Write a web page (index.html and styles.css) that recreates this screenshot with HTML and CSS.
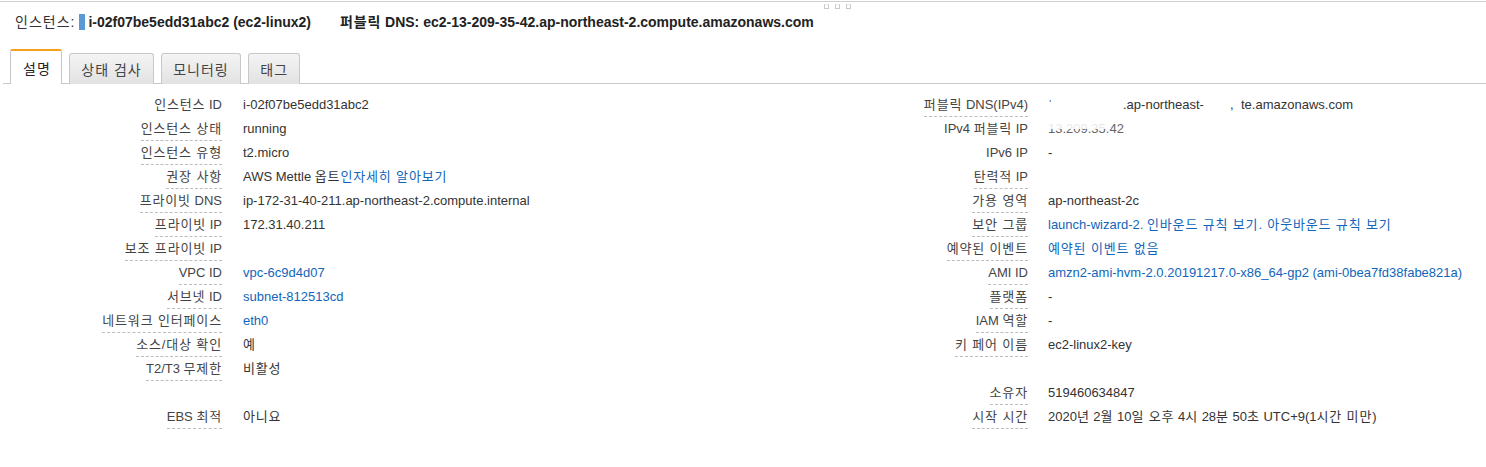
FILE: index.html
```html
<!DOCTYPE html>
<html lang="ko">
<head>
<meta charset="utf-8">
<title>EC2 인스턴스 설명</title>
<link rel="stylesheet" href="styles.css">
</head>
<body>
<div class="page">
  <div class="header">
    <span class="hlabel">인스턴스:</span><span class="bar"></span><b class="hval">i-02f07be5edd31abc2 (ec2-linux2)</b>
    <b class="hdns"><span class="ko">퍼블릭</span> DNS: ec2-13-209-35-42.ap-northeast-2.compute.amazonaws.com</b>
    <div class="grip"><i></i><i></i><i></i></div>
  </div>
  <div class="tabs">
    <div class="tab active">설명</div>
    <div class="tab">상태 검사</div>
    <div class="tab">모니터링</div>
    <div class="tab">태그</div>
  </div>
  <div class="details">
    <div class="col left">
      <div class="k"><span><span class="ko">인스턴스</span> ID</span></div><div class="v">i-02f07be5edd31abc2</div>
      <div class="k"><span class="tip ko">인스턴스 상태</span></div><div class="v">running</div>
      <div class="k"><span class="tip ko">인스턴스 유형</span></div><div class="v">t2.micro</div>
      <div class="k"><span class="tip ko">권장 사항</span></div><div class="v">AWS Mettle <span class="ko">옵트</span><a class="ko">인자세히 알아보기</a></div>
      <div class="k"><span class="tip"><span class="ko">프라이빗</span> DNS</span></div><div class="v">ip-172-31-40-211.ap-northeast-2.compute.internal</div>
      <div class="k"><span class="tip"><span class="ko">프라이빗</span> IP</span></div><div class="v">172.31.40.211</div>
      <div class="k"><span class="tip"><span class="ko">보조 프라이빗</span> IP</span></div><div class="v"></div>
      <div class="k"><span class="tip">VPC ID</span></div><div class="v"><a>vpc-6c9d4d07</a></div>
      <div class="k"><span class="tip"><span class="ko">서브넷</span> ID</span></div><div class="v"><a>subnet-812513cd</a></div>
      <div class="k"><span class="tip ko">네트워크 인터페이스</span></div><div class="v"><a>eth0</a></div>
      <div class="k"><span class="tip ko">소스/대상 확인</span></div><div class="v ko">예</div>
      <div class="k"><span class="tip">T2/T3 <span class="ko">무제한</span></span></div><div class="v ko">비활성</div>
      <div class="k"></div><div class="v"></div>
      <div class="k"><span class="tip">EBS <span class="ko">최적</span></span></div><div class="v ko">아니요</div>
    </div>
    <div class="col right">
      <div class="k"><span class="tip"><span class="ko">퍼블릭</span> DNS(IPv4)</span></div><div class="v"><span class="red1">ˈ</span><span class="red2">.ap-northeast-</span><span class="red3">,</span><span class="red4">te.amazonaws.com</span></div>
      <div class="k"><span>IPv4 <span class="ko">퍼블릭</span> IP</span></div><div class="v"><span class="masked">13.209.35.42</span></div>
      <div class="k"><span>IPv6 IP</span></div><div class="v">-</div>
      <div class="k"><span class="tip"><span class="ko">탄력적</span> IP</span></div><div class="v"></div>
      <div class="k"><span class="tip ko">가용 영역</span></div><div class="v">ap-northeast-2c</div>
      <div class="k"><span class="tip ko">보안 그룹</span></div><div class="v"><a>launch-wizard-2. <span class="ko">인바운드 규칙 보기. 아웃바운드 규칙 보기</span></a></div>
      <div class="k"><span class="tip ko">예약된 이벤트</span></div><div class="v"><a class="ko">예약된 이벤트 없음</a></div>
      <div class="k"><span class="tip">AMI ID</span></div><div class="v"><a>amzn2-ami-hvm-2.0.20191217.0-x86_64-gp2 (ami-0bea7fd38fabe821a)</a></div>
      <div class="k"><span class="tip ko">플랫폼</span></div><div class="v">-</div>
      <div class="k"><span class="tip">IAM <span class="ko">역할</span></span></div><div class="v">-</div>
      <div class="k"><span class="tip ko">키 페어 이름</span></div><div class="v">ec2-linux2-key</div>
      <div class="k"></div><div class="v"></div>
      <div class="k"><span class="tip ko">소유자</span></div><div class="v">519460634847</div>
      <div class="k"><span class="tip ko">시작 시간</span></div><div class="v">2020<span class="ko">년</span> 2<span class="ko">월</span> 10<span class="ko">일 오후</span> 4<span class="ko">시</span> 28<span class="ko">분</span> 50<span class="ko">초</span> UTC+9(1<span class="ko">시간 미만</span>)</div>
    </div>
  </div>
</div>
</body>
</html>
```

FILE: styles.css
```css
html, body {
  margin: 0;
  padding: 0;
  background: #fff;
}
body {
  font-family: "Liberation Sans", "Noto Sans CJK KR", Arial, sans-serif;
  color: #333;
}
.page {
  position: relative;
  width: 1486px;
  height: 467px;
  overflow: hidden;
}
.ko {
  letter-spacing: 0.85px;
}
.header {
  margin-top: 1px;
  border-top: 1px solid #d0d0d0;
  height: 49px;
  display: flex;
  align-items: flex-start;
  padding: 11px 0 0 15px;
  box-sizing: border-box;
  font-size: 14px;
  line-height: 18px;
  color: #222;
}
.hlabel {
  color: #333;
  letter-spacing: 1px;
}
.bar {
  display: inline-block;
  width: 6px;
  height: 16px;
  background: #5b9bd5;
  margin: 1px 3px 0 4px;
}
.hval {
  font-weight: bold;
}
.hdns {
  font-weight: bold;
  margin-left: 29px;
}
.grip {
  position: absolute;
  left: 824px;
  top: 4px;
  display: flex;
  gap: 6px;
}
.grip i {
  display: block;
  width: 3px;
  height: 3px;
  border: 1px solid #c8c8c8;
  border-top-color: #e6e6e6;
}
.tabs {
  display: flex;
  align-items: flex-end;
  gap: 7px;
  margin-left: 3px;
  padding-left: 7px;
  border-bottom: 1px solid #c8c8c8;
  height: 34px;
  box-sizing: border-box;
}
.tab {
  height: 31px;
  margin-bottom: -1px;
  padding: 0 11px 0 11.5px;
  box-sizing: border-box;
  font-size: 14px;
  line-height: 30px;
  letter-spacing: 1px;
  color: #444;
  border: 1px solid #c8c8c8;
  border-bottom: none;
  border-radius: 3px 3px 0 0;
  background: linear-gradient(#f4f4f4, #e2e2e2);
  font-family: "Noto Sans CJK KR", "Liberation Sans", sans-serif;
}
.tab.active {
  padding: 2px 10px 0 12px;
  background: #fff;
  border-top: 2px solid #f7a01c;
  border-radius: 2px 2px 0 0;
  color: #222;
  height: 35px;
}
.details {
  display: grid;
  grid-template-columns: 743px 1fr;
  margin-top: 10px;
  font-size: 13px;
}
.col {
  display: grid;
  grid-auto-rows: 24px;
  column-gap: 21px;
}
.col.left {
  grid-template-columns: 222px 1fr;
}
.col.right {
  grid-template-columns: 285px 1fr;
  column-gap: 20px;
}
.k {
  text-align: right;
  color: #444;
}
.k > span {
  display: inline-block;
  line-height: 22px;
  border-bottom: 1px solid transparent;
}
.k > span.tip {
  border-bottom: 1px dashed #bdbdbd;
}
.v {
  line-height: 22px;
  color: #333;
  white-space: nowrap;
}
.v a {
  color: #1166bb;
  text-decoration: none;
}
.red1 {
  display: inline-block;
  width: 75px;
}
.red2 {
  display: inline-block;
  width: 107px;
}
.red3 {
  display: inline-block;
  width: 11px;
}
.masked {
  position: relative;
  display: inline-block;
  color: #666;
}
.masked::after {
  content: "";
  position: absolute;
  left: 0;
  right: 13px;
  top: 3px;
  height: 8px;
  background: rgba(255, 255, 255, 0.85);
}
```
